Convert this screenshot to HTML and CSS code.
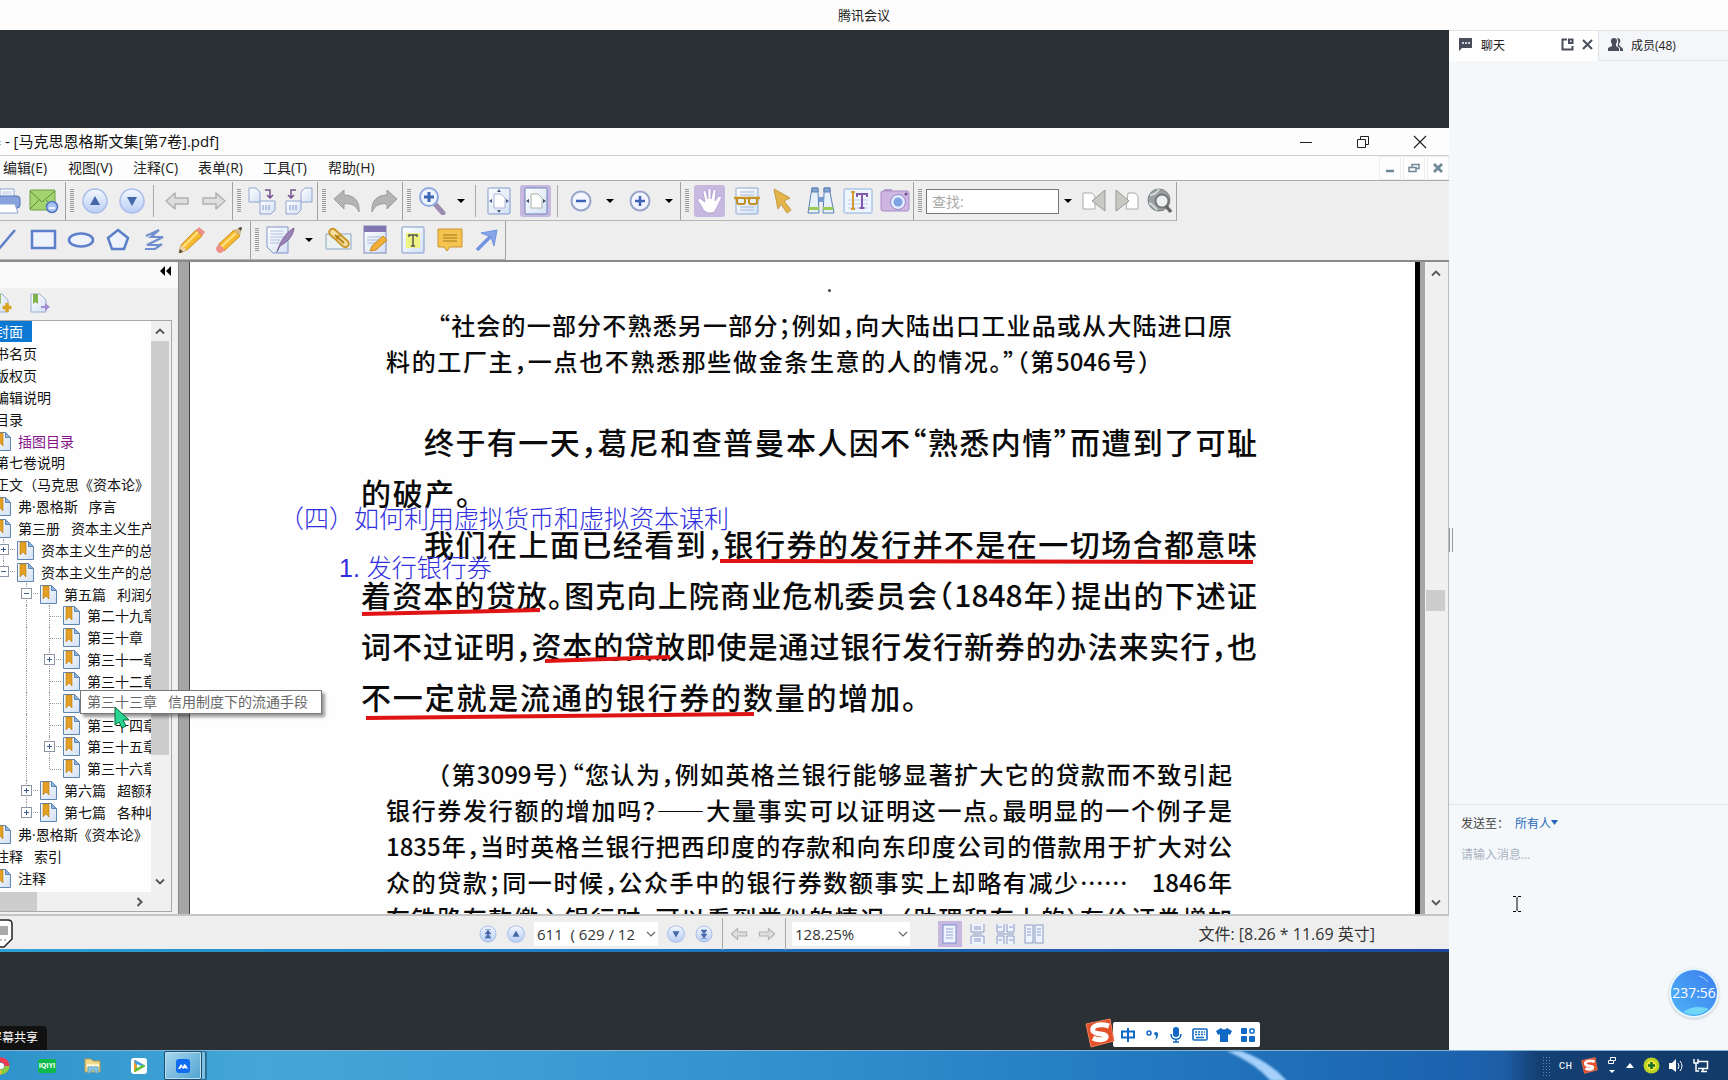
FILE: index.html
```html
<!DOCTYPE html>
<html lang="zh-CN">
<head>
<meta charset="utf-8">
<title>腾讯会议</title>
<link rel="stylesheet" href="styles.css">
</head>
<body>
<svg class="defs" width="0" height="0" aria-hidden="true">
  <defs>
    <linearGradient id="gBlue" x1="0" y1="0" x2="0" y2="1"><stop offset="0" stop-color="#f4f8ff"/><stop offset="1" stop-color="#b9cdf3"/></linearGradient>
    <linearGradient id="gPaper" x1="0" y1="0" x2="1" y2="1"><stop offset="0" stop-color="#ffffff"/><stop offset="1" stop-color="#d3e0f3"/></linearGradient>
    <linearGradient id="gBall" x1="0" y1="1" x2="1" y2="0"><stop offset="0" stop-color="#4db4f7"/><stop offset="1" stop-color="#3c7df0"/></linearGradient>
  </defs>
  <symbol id="bm" viewBox="0 0 17 19"><path d="M.5.5h11l5 5v13H.5z" fill="url(#gPaper)" stroke="#5f86b3"/><path d="M11.500.5v5h5z" fill="#8fb6de" stroke="#5f86b3"/><path d="M3 1h6v13l-3-3-3 3z" fill="#e3a024" stroke="#b67a10" stroke-width=".6"/></symbol>
  <symbol id="up" viewBox="0 0 26 26"><circle cx="13" cy="13" r="12" fill="url(#gBlue)" stroke="#a9bdea" stroke-width="1.500"/><path d="M13 8l5 9H8z" fill="#4467a8"/></symbol>
  <symbol id="down" viewBox="0 0 26 26"><circle cx="13" cy="13" r="12" fill="url(#gBlue)" stroke="#a9bdea" stroke-width="1.500"/><path d="M13 18l5-9H8z" fill="#4467a8"/></symbol>
  <symbol id="left" viewBox="0 0 26 20"><path d="M2 10l9-8v5h13v6H11v5z" fill="#dedede" stroke="#b0b0b0" stroke-width="1.500" stroke-linejoin="round"/></symbol>
  <symbol id="right" viewBox="0 0 26 20"><path d="M24 10l-9-8v5H2v6h13v5z" fill="#dedede" stroke="#b0b0b0" stroke-width="1.500" stroke-linejoin="round"/></symbol>
  <symbol id="chev" viewBox="0 0 12 8"><path d="M2 1.500l4 4 4-4" fill="none" stroke="currentColor" stroke-width="1.800"/></symbol>
  <symbol id="thin" viewBox="0 0 12 8"><path d="M2 2l4 4 4-4" fill="none" stroke="#666" stroke-width="1.200"/></symbol>
  <symbol id="sogou" viewBox="0 0 30 30"><path d="M1 6L25 1l4 22-23 6z" fill="#e2512a" stroke="#f0805c"/><path d="M24 8C14 5 6 8 8 13c2 4 12 2 13 5 1 4-8 5-13 2" fill="none" stroke="#fff" stroke-width="5"/></symbol>
</svg>

<header class="app-title">腾讯会议</header>
<main class="main">
  <section class="stage">
    <div class="win">
      <div class="win-title">
        <h1>器 - [马克思恩格斯文集[第7卷].pdf]</h1>
        <div class="win-btns">
          <button aria-label="最小化"><svg width="14" height="14"><path d="M1 7.500h12" stroke="#222"/></svg></button>
          <button aria-label="还原"><svg width="14" height="14" fill="none" stroke="#222"><path d="M1.500 4.500h8v8h-8zM4.500 4.500v-3h8v8h-3"/></svg></button>
          <button aria-label="关闭"><svg width="14" height="14"><path d="M1 1l12 12M13 1L1 13" stroke="#222" stroke-width="1.200"/></svg></button>
        </div>
      </div>
      <nav class="menu">
        <button>编辑(E)</button><button>视图(V)</button><button>注释(C)</button><button>表单(R)</button><button>工具(T)</button><button>帮助(H)</button>
        <div class="mdi">
          <button aria-label="最小化文档"><svg width="10" height="10"><path d="M1 8h8" stroke="#718896" stroke-width="2.500"/></svg></button>
          <button aria-label="还原文档"><svg width="12" height="10" fill="none" stroke="#718896" stroke-width="1.500"><path d="M1 4.500h7v4H1zM4 4V1.500h7v4H8"/></svg></button>
          <button aria-label="关闭文档"><svg width="10" height="10"><path d="M1 1l8 8M9 1L1 9" stroke="#718896" stroke-width="2.800"/></svg></button>
        </div>
      </nav>

      <div class="bars">
        <div class="bar">
          <div class="group first">
            <button class="tool" aria-label="打印"><svg width="28" height="26"><path d="M7 9V1h14v8" fill="#fff" stroke="#8aa5d4"/><rect x="1" y="8" width="26" height="12" rx="3" fill="#86a3de" stroke="#5574b5"/><path d="M6 16h16l3 9H3z" fill="#fff" stroke="#8aa5d4"/><path d="M9 4h10M9 6h10" stroke="#b5c4e4"/></svg></button>
            <button class="tool" aria-label="邮件"><svg width="30" height="26"><rect x="1" y="2" width="25" height="20" rx="1" fill="#a3d36e" stroke="#6f9f45"/><path d="M1 3l12 11L26 3M1 21l9-9M26 21l-9-9" fill="none" stroke="#5f913a"/><circle cx="23" cy="19" r="5.500" fill="#a9c4f2" stroke="#4f74c0" stroke-width="1.500"/><path d="M20 20h6" stroke="#fff" stroke-width="1.500"/></svg></button>
          </div>
          <div class="group"><i class="grip"></i>
            <button class="tool" aria-label="上一页"><svg width="26" height="26"><use href="#up"/></svg></button>
            <button class="tool" aria-label="下一页"><svg width="26" height="26"><use href="#down"/></svg></button>
            <i class="sep"></i>
            <button class="tool" aria-label="后退"><svg width="26" height="20"><use href="#left"/></svg></button>
            <button class="tool" aria-label="前进"><svg width="26" height="20"><use href="#right"/></svg></button>
          </div>
          <div class="group"><i class="grip"></i>
            <button class="tool" aria-label="导入页"><svg width="28" height="28" stroke="#91a4d1"><path d="M1 1h7l4 4v10H1z" fill="url(#gPaper)"/><path d="M12 14h15v9l-4 4H12z" fill="url(#gPaper)"/><path d="M15 18v5M18 18v5M21 18v5" stroke="#7f93cd"/><path d="M17 3h5v8m-3-3l3 3 3-3" fill="none" stroke="#77508f" stroke-width="1.500"/></svg></button>
            <button class="tool" aria-label="导出页"><svg width="28" height="28" stroke="#91a4d1"><path d="M20 1h7v14H16V5z" fill="url(#gPaper)"/><path d="M1 14h15v9l-4 4H1z" fill="url(#gPaper)"/><path d="M5 18v5M8 18v5M11 18v5" stroke="#7f93cd"/><path d="M11 3H6v8m-3-3l3 3 3-3" fill="none" stroke="#77508f" stroke-width="1.500"/></svg></button>
          </div>
          <div class="group"><i class="grip"></i>
            <button class="tool" aria-label="撤销"><svg width="28" height="24"><path d="M1 10L11 1v5c10 0 16 6 15 17-3-7-8-9-15-8v5z" fill="#b4b4b4" stroke="#9c9c9c"/></svg></button>
            <button class="tool" aria-label="重做"><svg width="28" height="24"><path d="M27 10L17 1v5C7 6 1 12 2 23c3-7 8-9 15-8v5z" fill="#b4b4b4" stroke="#9c9c9c"/></svg></button>
          </div>
          <div class="group"><i class="grip"></i>
            <button class="tool" aria-label="放大镜"><svg width="28" height="28"><path d="M17 17l8 9" stroke="#9b8cb0" stroke-width="5" stroke-linecap="round"/><circle cx="11" cy="10" r="9" fill="#eef4ff" stroke="#8faadd" stroke-width="2"/><path d="M11 5v10M6 10h10" stroke="#3f67b0" stroke-width="3"/></svg></button>
            <button class="caret" aria-label="缩放选项"></button>
            <i class="sep"></i>
            <button class="tool" aria-label="适合页面"><svg width="24" height="28"><rect x="1" y="1" width="22" height="26" rx="1" fill="url(#gPaper)" stroke="#7f9bd0"/><path d="M7 7h7l4 4v10H7z" fill="#fff" stroke="#a6b6d6"/><path d="M12 2l2 3h-4zM12 26l2-3h-4zM2 14l3-2v4zM22 14l-3-2v4z" fill="#4a5d88"/></svg></button>
            <button class="tool on" aria-label="适合宽度"><svg width="24" height="28"><rect x="1" y="1" width="22" height="26" rx="1" fill="url(#gPaper)" stroke="#6a82bb"/><path d="M7 7h7l4 4v10H7z" fill="#fff" stroke="#a6b6a6"/><path d="M2 14l3-2v4zM22 14l-3-2v4z" fill="#39496f"/></svg></button>
            <i class="sep"></i>
            <button class="tool" aria-label="缩小"><svg width="22" height="22"><circle cx="11" cy="11" r="9.500" fill="#f3f6ff" stroke="#98a3c8" stroke-width="2"/><path d="M6 11h10" stroke="#3e62b4" stroke-width="2.500"/></svg></button>
            <button class="caret" aria-label="缩小选项"></button>
            <button class="tool" aria-label="放大"><svg width="22" height="22"><circle cx="11" cy="11" r="9.500" fill="#f3f6ff" stroke="#98a3c8" stroke-width="2"/><path d="M6 11h10M11 6v10" stroke="#3e62b4" stroke-width="2.500"/></svg></button>
            <button class="caret" aria-label="放大选项"></button>
          </div>
          <div class="group"><i class="grip"></i>
            <button class="tool on" aria-label="手形工具"><svg width="26" height="28"><path d="M8 15L6 5c0-2 3-2 3 0l2 7V3c0-2 3-2 3 0v9l2-8c0-2 3-2 3 0l-1 10 3-4c2-2 4 0 3 2l-5 10c-1 3-3 4-6 4-4 0-7-3-8-6L1 14c-1-2 2-4 4-1z" fill="#fff" stroke="#a996cf" stroke-width=".7"/></svg></button>
            <button class="tool" aria-label="阅读"><svg width="28" height="28"><rect x="3" y="1" width="22" height="26" rx="1" fill="url(#gPaper)" stroke="#8da6d2"/><path d="M7 5h14M7 8h14M7 20h14M7 23h14" stroke="#a8b9da"/><path d="M1 11h26" stroke="#c99a2b" stroke-width="2.500"/><rect x="4" y="11" width="8" height="6" rx="2" fill="#e7f0fb" stroke="#c08f20" stroke-width="2"/><rect x="16" y="11" width="8" height="6" rx="2" fill="#e7f0fb" stroke="#c08f20" stroke-width="2"/></svg></button>
            <button class="tool" aria-label="选择"><svg width="22" height="26"><path d="M1 1l16 9-6 3 7 9-4 3-6-9-3 5z" fill="#e3b54c" stroke="#c59a3a"/></svg></button>
            <button class="tool" aria-label="查找"><svg width="28" height="28" stroke="#5d7fb5"><path d="M5 1h6v4l1 21H1L4 7z" fill="#e6f1fb"/><path d="M17 1h6v4l4 21H16l1-19z" fill="#e6f1fb"/><path d="M5 1h6v4H5zM17 1h6v4h-6z" fill="#83a6d6"/><path d="M2 20h10v3H2zM16 20h10v3H16z" fill="#9acb57" stroke="none"/><path d="M12 10h5v5h-5z" fill="#7599cf" stroke="none"/></svg></button>
            <button class="tool" aria-label="选择文本"><svg width="30" height="26"><rect x="1" y="1" width="28" height="24" rx="1" fill="#eef5ff" stroke="#8cafdf"/><path d="M5 12h20M5 16h20M5 20h20" stroke="#c0cfe6"/><path d="M10 4v17M8 4h4M8 21h4" stroke="#d09b32" stroke-width="2"/><path d="M14 9V6h10v3M19 6v14M16.500 20h5" stroke="#7f5aa8" stroke-width="2" fill="none"/></svg></button>
            <button class="tool" aria-label="快照"><svg width="30" height="26"><rect x="4" y="1" width="8" height="5" fill="#b79ed0"/><rect x="1" y="3" width="28" height="20" rx="2" fill="#cfb6e1" stroke="#a98cc6"/><circle cx="18" cy="14" r="7.500" fill="#e4ecff" stroke="#9387c4"/><circle cx="18" cy="14" r="4.500" fill="#7fa2e2"/><circle cx="26" cy="6" r="1.500" fill="#6d4a94"/></svg></button>
          </div>
          <div class="group"><i class="grip"></i>
            <input class="find" type="text" placeholder="查找:" aria-label="查找">
            <button class="caret find-caret" aria-label="查找选项"></button>
            <button class="tool small" aria-label="查找上一个"><svg width="26" height="24" stroke="#aaa"><path d="M2 4h9l3 3v13H2z" fill="#fff"/><path d="M24 1v21L11 12z" fill="#c9c8c2" stroke="#999"/></svg></button>
            <button class="tool small" aria-label="查找下一个"><svg width="26" height="24" stroke="#aaa"><path d="M14 4h7l3 3v13H12z" fill="#fff"/><path d="M2 1v21l13-10z" fill="#c9c8c2" stroke="#999"/></svg></button>
            <button class="tool small" aria-label="高级搜索"><svg width="26" height="26"><circle cx="12" cy="12" r="11" fill="#9aa0a3" stroke="#7b8082"/><path d="M3 7c5 0 7-3 9-6M2 15c5 2 6 5 8 7" stroke="#d5d9da" stroke-width="2" fill="none"/><circle cx="15" cy="13" r="6.500" fill="#eef1f2" stroke="#777" stroke-width="2"/><path d="M19 18l5 6" stroke="#666" stroke-width="3.500"/></svg></button>
          </div>
        </div>
        <div class="bar">
          <div class="group first">
            <button class="tool" aria-label="直线"><svg width="24" height="24"><path d="M3 22L20 2" stroke="#5b7fc9" stroke-width="2.500"/></svg></button>
            <button class="tool" aria-label="矩形"><svg width="28" height="22"><rect x="2" y="2" width="23" height="17" fill="#eef2fb" stroke="#5b7fc9" stroke-width="2.500"/></svg></button>
            <button class="tool" aria-label="椭圆"><svg width="28" height="20"><ellipse cx="14" cy="10" rx="12" ry="6.500" fill="#eef2fb" stroke="#5b7fc9" stroke-width="2.500"/></svg></button>
            <button class="tool" aria-label="多边形"><svg width="26" height="24"><path d="M13 2l10 8-4 11H7L3 10z" fill="#eef2fb" stroke="#5b7fc9" stroke-width="2.500"/></svg></button>
            <button class="tool" aria-label="折线"><svg width="24" height="24"><path d="M3 8L16 2 8 9h12L4 17h13M2 21h10l7-5" fill="none" stroke="#6f8fd0" stroke-width="2.200"/></svg></button>
            <button class="tool" aria-label="铅笔"><svg width="28" height="28"><path d="M1 27l2-8L18 4l6 6L9 24z" fill="#f6b92f" stroke="#c98e1e"/><path d="M5 21L20 6" stroke="#ffe28a" stroke-width="2"/><path d="M18 4l3-3 6 5-3 4z" fill="#ee8f8a"/><path d="M1 27l2-8 6 5z" fill="#ecd1a7"/><path d="M1 27l1-4 3 3z" fill="#444"/></svg></button>
            <button class="tool" aria-label="橡皮擦"><svg width="28" height="28"><path d="M3 19L19 4l6 6L9 25z" fill="#f6b92f" stroke="#c98e1e"/><path d="M6 21L21 7" stroke="#ffe28a" stroke-width="2"/><path d="M1 22l3-4 6 6-4 3c-3 0-5-2-5-5z" fill="#ee8f8a"/><path d="M19 4l8-3-2 9z" fill="#d9b98a"/><path d="M23 2l4-1-1 4z" fill="#444"/></svg></button>
          </div>
          <div class="group"><i class="grip"></i>
            <button class="tool" aria-label="签名"><svg width="30" height="30"><path d="M2 2h21v26H8l-6-6z" fill="url(#gPaper)" stroke="#7f95c6"/><path d="M5 6h13M5 9h13M5 12h13M5 15h10M5 18h10" stroke="#b3c0dd"/><path d="M12 27C15 17 20 8 29 3c-1 9-7 14-14 18z" fill="#9b84b8" stroke="#7c6698"/></svg></button>
            <button class="caret" aria-label="签名选项"></button>
            <button class="tool" aria-label="链接"><svg width="28" height="26"><path d="M1 7h25v15H1z" fill="#e9f2ee" stroke="#8ba6c4"/><rect x="3" y="4" width="14" height="7" rx="3.500" transform="rotate(42 10 8)" fill="#f3dfa0" stroke="#c9972c" stroke-width="2"/><rect x="11" y="11" width="14" height="7" rx="3.500" transform="rotate(42 18 14)" fill="#f3dfa0" stroke="#c9972c" stroke-width="2"/><path d="M10 8l9 8" stroke="#b07f18" stroke-width="2"/></svg></button>
            <button class="tool" aria-label="便签"><svg width="26" height="30"><rect x="1" y="1" width="22" height="27" fill="url(#gPaper)" stroke="#7f88bd"/><rect x="1" y="1" width="22" height="6" fill="#8176b2"/><path d="M4 12h14M4 15h12M4 18h9" stroke="#a9b6d7"/><path d="M7 26l2-5 11-10 4 4-11 10z" fill="#f3ae35" stroke="#c48a24"/></svg></button>
            <button class="tool" aria-label="文本框"><svg width="24" height="28"><rect x="1" y="1" width="22" height="26" rx="1" fill="url(#gPaper)" stroke="#7f99cb"/><rect x="5" y="7" width="14" height="15" fill="#eef283"/><path d="M8 11V9h8v2M12 9v11M10 20h4" fill="none" stroke="#555" stroke-width="1.500"/></svg></button>
            <button class="tool" aria-label="批注"><svg width="28" height="26"><path d="M2 2h24v18H14l-3 4-3-4H2z" fill="#f5c34f" stroke="#c79530"/><path d="M7 8h14M7 11h14M7 14h14" stroke="#a87a1c"/></svg></button>
            <button class="tool" aria-label="箭头"><svg width="24" height="24"><path d="M2 22L16 8" stroke="#7094de" stroke-width="3.500"/><path d="M6 5L22 2l-3 16-3-9z" fill="#86a4e8" stroke="#7094de"/></svg></button>
          </div>
        </div>
      </div>

      <div class="work">
        <aside class="side">
          <div class="side-head"><button aria-label="折叠"><svg width="12" height="10"><path d="M6 0v10L1 5zM12 0v10L7 5z" fill="#000"/></svg></button></div>
          <div class="side-tools">
            <button aria-label="添加书签"><svg width="20" height="20"><path d="M1 1h9l6 6v12H1z" fill="url(#gPaper)" stroke="#98aecb"/><path d="M3 1h6v10l-3-2-3 2z" fill="#95c064"/><path d="M15 10v9M10.500 14.500h9" stroke="#d9a520" stroke-width="3.500"/></svg></button>
            <button aria-label="展开书签"><svg width="20" height="20"><path d="M1 1h9l6 6v12H1z" fill="url(#gPaper)" stroke="#98aecb"/><path d="M3 1h5v10l-2.500-2L3 11z" fill="#7fb14e"/><path d="M11 13h4v-3l5 4-5 4v-3h-4z" fill="#a48cd0"/></svg></button>
          </div>
          <div class="list">
            <div class="list-main">
              <ul class="tree">
                <li><svg class="bm"><use href="#bm"/></svg><a href="#" class="sel">封面</a></li>
                <li><svg class="bm"><use href="#bm"/></svg><a href="#">书名页</a></li>
                <li><svg class="bm"><use href="#bm"/></svg><a href="#">版权页</a></li>
                <li><svg class="bm"><use href="#bm"/></svg><a href="#">编辑说明</a></li>
                <li><svg class="bm"><use href="#bm"/></svg><a href="#">目录</a></li>
                <li><i></i><svg class="bm"><use href="#bm"/></svg><a href="#" class="seen">插图目录</a></li>
                <li><svg class="bm"><use href="#bm"/></svg><a href="#">第七卷说明</a></li>
                <li><svg class="bm"><use href="#bm"/></svg><a href="#">正文（马克思《资本论》</a></li>
                <li><i></i><svg class="bm"><use href="#bm"/></svg><a href="#">弗·恩格斯&nbsp;&nbsp; 序言</a></li>
                <li><i></i><svg class="bm"><use href="#bm"/></svg><a href="#">第三册&nbsp;&nbsp; 资本主义生产的总过程</a></li>
                <li><i></i><i class="v h plus"></i><svg class="bm"><use href="#bm"/></svg><a href="#">资本主义生产的总过程（上）</a></li>
                <li><i></i><i class="v h end minus"></i><svg class="bm"><use href="#bm"/></svg><a href="#">资本主义生产的总过程（下）</a></li>
                <li><i></i><i></i><i class="v h minus"></i><svg class="bm"><use href="#bm"/></svg><a href="#">第五篇&nbsp;&nbsp; 利润分为利息</a></li>
                <li><i></i><i></i><i class="v"></i><i class="v h"></i><svg class="bm"><use href="#bm"/></svg><a href="#">第二十九章</a></li>
                <li><i></i><i></i><i class="v"></i><i class="v h"></i><svg class="bm"><use href="#bm"/></svg><a href="#">第三十章</a></li>
                <li><i></i><i></i><i class="v"></i><i class="v h plus"></i><svg class="bm"><use href="#bm"/></svg><a href="#">第三十一章</a></li>
                <li><i></i><i></i><i class="v"></i><i class="v h"></i><svg class="bm"><use href="#bm"/></svg><a href="#">第三十二章</a></li>
                <li><i></i><i></i><i class="v"></i><i class="v h"></i><svg class="bm"><use href="#bm"/></svg><a href="#">第三十三章</a></li>
                <li><i></i><i></i><i class="v"></i><i class="v h"></i><svg class="bm"><use href="#bm"/></svg><a href="#">第三十四章</a></li>
                <li><i></i><i></i><i class="v"></i><i class="v h plus"></i><svg class="bm"><use href="#bm"/></svg><a href="#">第三十五章</a></li>
                <li><i></i><i></i><i class="v"></i><i class="v h end"></i><svg class="bm"><use href="#bm"/></svg><a href="#">第三十六章</a></li>
                <li><i></i><i></i><i class="v h plus"></i><svg class="bm"><use href="#bm"/></svg><a href="#">第六篇&nbsp;&nbsp; 超额利润</a></li>
                <li><i></i><i></i><i class="v h end plus"></i><svg class="bm"><use href="#bm"/></svg><a href="#">第七篇&nbsp;&nbsp; 各种收入</a></li>
                <li><i></i><svg class="bm"><use href="#bm"/></svg><a href="#">弗·恩格斯《资本论》</a></li>
                <li><svg class="bm"><use href="#bm"/></svg><a href="#">注释&nbsp;&nbsp; 索引</a></li>
                <li><i></i><svg class="bm"><use href="#bm"/></svg><a href="#">注释</a></li>
              </ul>
              <div class="vbar">
                <button class="flip" aria-label="向上"><svg width="12" height="8"><use href="#chev"/></svg></button>
                <div class="track"><div class="thumb"></div></div>
                <button aria-label="向下"><svg width="12" height="8"><use href="#chev"/></svg></button>
              </div>
            </div>
            <div class="hbar"><div class="thumb"></div><button aria-label="向右"><svg width="8" height="12"><path d="M1.500 2l4 4-4 4" fill="none" stroke="#555" stroke-width="2"/></svg></button></div>
          </div>
          <div class="tip" role="tooltip">第三十三章&nbsp;&nbsp; 信用制度下的流通手段</div>
          <svg class="pointer" width="18" height="24"><path d="M2 1v18l4-3 3 6 4-2-3-6h6z" fill="#28d592" stroke="#063" /></svg>
        </aside>
        <div class="split"></div>
        <article class="page">
          <i class="speck"></i>
          <p class="quote"><span class="line in">“社会的一部分不熟悉另一部分；例如，向大陆出口工业品或从大陆进口原</span><span class="line short">料的工厂主，一点也不熟悉那些做金条生意的人的情况。”（第5046号）</span></p>
          <p class="text"><span class="line in">终于有一天，葛尼和查普曼本人因不“熟悉内情”而遭到了可耻</span><span class="line last">的破产。</span><span class="line in">我们在上面已经看到，银行券的发行并不是在一切场合都意味</span><span class="line">着资本的贷放。图克向上院商业危机委员会（1848年）提出的下述证</span><span class="line">词不过证明，资本的贷放即使是通过银行发行新券的办法来实行，也</span><span class="line closing">不一定就是流通的银行券的数量的增加。</span></p>
          <p class="quote"><span class="line in">（第3099号）“您认为，例如英格兰银行能够显著扩大它的贷款而不致引起</span><span class="line">银行券发行额的增加吗？——大量事实可以证明这一点。最明显的一个例子是</span><span class="line">1835年，当时英格兰银行把西印度的存款和向东印度公司的借款用于扩大对公</span><span class="line">众的贷款；同一时候，公众手中的银行券数额事实上却略有减少……&emsp;1846年</span><span class="line">在铁路存款缴入银行时，可以看到类似的情况。（助理和存上的）有价证券增加</span></p>
          <span class="note note-a">（四）如何利用虚拟货币和虚拟资本谋利</span>
          <span class="note note-b">1. 发行银行券</span>
          <svg class="marks" width="1226" height="652" fill="none" stroke="#e01414" stroke-width="4"><path d="M530 299l533 1M172 352l178-4M355 399l125-4M176 456l388-4"/></svg>
        </article>
        <div class="edge"></div>
        <div class="vbar doc-bar">
          <button class="flip" aria-label="向上滚动"><svg width="12" height="8"><use href="#chev"/></svg></button>
          <div class="track"><div class="thumb"></div></div>
          <button aria-label="向下滚动"><svg width="12" height="8"><use href="#chev"/></svg></button>
        </div>
      </div>

      <footer class="status">
        <svg class="badge" width="14" height="30"><path d="M0 1h8q4 0 4 4v15l-8 8H0" fill="#fff" stroke="#222" stroke-width="1.500"/><path d="M0 7h8v9H0z" fill="#aaa"/><path d="M0 21h8" stroke="#777" stroke-dasharray="2"/></svg>
        <button aria-label="首页"><svg width="18" height="18"><circle cx="9" cy="9" r="8" fill="url(#gBlue)" stroke="#a9bdea"/><path d="M9 5l3 4H6zM9 9l3 4H6zM6 4.500h6" fill="#4467a8" stroke="#4467a8" stroke-width=".5"/></svg></button>
        <button aria-label="上页"><svg width="18" height="18"><use href="#up"/></svg></button>
        <span class="combo num"><select aria-label="页码"><option>611&nbsp; ( 629 / 12</option></select><svg width="12" height="8"><use href="#thin"/></svg></span>
        <button aria-label="下页"><svg width="18" height="18"><use href="#down"/></svg></button>
        <button aria-label="末页"><svg width="18" height="18"><circle cx="9" cy="9" r="8" fill="url(#gBlue)" stroke="#a9bdea"/><path d="M9 9l3-4H6zM9 13l3-4H6zM6 13.500h6" fill="#4467a8" stroke="#4467a8" stroke-width=".5"/></svg></button>
        <i class="sep"></i>
        <button aria-label="后退视图"><svg width="18" height="18"><use href="#left"/></svg></button>
        <button aria-label="前进视图"><svg width="18" height="18"><use href="#right"/></svg></button>
        <i class="sep"></i>
        <span class="combo zoom"><select aria-label="缩放"><option>128.25%</option></select><svg width="12" height="8"><use href="#thin"/></svg></span>
        <div class="views">
          <button class="on" aria-label="单页"><svg width="18" height="20"><rect x="2" y="1" width="13" height="18" fill="#eef3ff" stroke="#7c8fcb"/><path d="M5 5h7M5 8h7M5 11h7M5 14h7" stroke="#93a5d8"/></svg></button>
          <button aria-label="连续"><svg width="18" height="20" fill="#eef3ff" stroke="#8b9cc4"><path d="M2 0v8h13V0M2 20v-8h13v8"/><path d="M4 10h9M5 3h7M5 5h7M5 15h7M5 17h7"/></svg></button>
          <button aria-label="连续对开"><svg width="20" height="20" fill="#eef3ff" stroke="#8b9cc4"><path d="M1 0v8h7V0M11 0v8h7V0M1 20v-8h7v8M11 20v-8h7v8M2 3h4M13 3h4M2 16h4M13 16h4M1 10h17"/></svg></button>
          <button aria-label="对开"><svg width="20" height="20" fill="#eef3ff" stroke="#8b9cc4"><rect x="1" y="1" width="8" height="18"/><rect x="11" y="1" width="8" height="18"/><path d="M3 5h4M3 8h4M3 11h4M13 5h4M13 8h4M13 11h4"/></svg></button>
        </div>
        <span class="size">文件: [8.26 * 11.69 英寸]</span>
      </footer>
    </div>

    <div class="share">屏幕共享</div>
    <div class="ime">
      <svg class="ime-logo" width="32" height="30"><use href="#sogou"/></svg>
      <button aria-label="中文"><svg width="16" height="16" fill="none" stroke="#1069c4" stroke-width="2"><path d="M2 4.500h12v6H2zM8 1v14"/></svg></button>
      <button aria-label="标点"><svg width="14" height="14"><circle cx="4" cy="5" r="2" fill="none" stroke="#1069c4" stroke-width="1.500"/><path d="M9 6a2 2 0 114 0c0 3-1 5-3 6 1-2 1-3 1-4z" fill="#1069c4"/></svg></button>
      <button aria-label="语音"><svg width="14" height="16"><rect x="4" y="0" width="6" height="10" rx="3" fill="#1069c4"/><path d="M2 7c0 7 10 7 10 0M7 12v3M4 15h6" fill="none" stroke="#1069c4" stroke-width="1.500"/></svg></button>
      <button aria-label="键盘"><svg width="16" height="14"><rect x="1" y="1" width="14" height="11" rx="1" fill="none" stroke="#1069c4" stroke-width="1.600"/><path d="M3 4h10M3 6.500h10" stroke="#1069c4" stroke-width="1.600" stroke-dasharray="2 1"/><path d="M4 9.500h8" stroke="#1069c4" stroke-width="1.500"/></svg></button>
      <button aria-label="皮肤"><svg width="16" height="14"><path d="M5 0q3 3 6 0l5 3-2 4-2-1v8H4V6L2 7 0 3z" fill="#1069c4"/></svg></button>
      <button aria-label="工具箱"><svg width="14" height="14" fill="#1069c4"><rect width="6" height="6" rx="1"/><rect y="8" width="6" height="6" rx="1"/><rect x="8" y="8" width="6" height="6" rx="1"/><rect x="9" y="1" width="4" height="4" rx="1" fill="none" stroke="#1069c4" stroke-width="1.600"/></svg></button>
    </div>
    <i class="handle"></i>
  </section>

  <aside class="chat">
    <div class="tabs">
      <div class="tab active">
        <svg width="15" height="13"><path d="M1 0h13v10H4l-3 3z" fill="#4a4e5c"/><path d="M4 5h2M7 5h2M10 5h2" stroke="#fff" stroke-width="1.500"/></svg>
        <span>聊天</span>
        <button class="pop" aria-label="弹出"><svg width="13" height="13" fill="none" stroke="#4a4e5c" stroke-width="2"><path d="M6 1.500H1.500v10h10V8M8 1.500h3.500V5H8z"/></svg></button>
        <button aria-label="关闭聊天"><svg width="11" height="11"><path d="M1 1l9 9M10 1l-9 9" stroke="#4a4e5c" stroke-width="2"/></svg></button>
      </div>
      <div class="tab">
        <svg width="15" height="13" fill="#4a4e5c"><path d="M6 0c3 0 4 3 2 6v2l3 2v3H0v-3l4-2V6C2 3 3 0 6 0z"/><path d="M9 0c4 0 4 4 2 6v1l4 4v2h-3v-3L9.500 8C11 4 10 2 9 0z"/></svg>
        <span>成员(48)</span>
      </div>
    </div>
    <div class="messages"></div>
    <div class="compose">
      <div class="to">发送至： <button>所有人<svg width="8" height="6"><path d="M0 0h7L3.500 5z" fill="#2468b8"/></svg></button></div>
      <textarea placeholder="请输入消息..." aria-label="消息"></textarea>
      <svg class="ibeam" width="8" height="16"><path d="M0 .5h3M5 .5h3M4 1v14M0 15.500h3M5 15.500h3" stroke="#000"/></svg>
      <div class="ball"><svg width="46" height="46"><circle cx="23" cy="23" r="23" fill="url(#gBall)"/><path d="M12 42q12-8 26-3a23 23 0 01-26 3" fill="#6fd6f8"/><path d="M28 6q5 1 9 6" stroke="#9fd0ff" fill="none"/></svg><span>237:56</span></div>
    </div>
  </aside>
</main>

<footer class="taskbar">
  <svg class="swoosh" width="90" height="30"><path d="M0 0h14q28 10 46 30H44Q28 12 0 0z" fill="#a4d0fb"/></svg>
  <div class="apps">
    <button aria-label="浏览器"><svg width="18" height="18"><circle cx="9" cy="9" r="6" fill="none" stroke="#f0394d" stroke-width="5"/><path d="M9 15a6 6 0 006-6" fill="none" stroke="#8bcf3c" stroke-width="5"/><path d="M3 9a6 6 0 006 6" fill="none" stroke="#f6c62c" stroke-width="5"/><circle cx="9" cy="9" r="3" fill="#fff"/></svg></button>
    <button aria-label="视频" class="iq"><span>iQIYI</span></button>
    <button aria-label="资源管理器"><svg width="18" height="16"><path d="M1 1h6l2 2h7v11H1z" fill="#eed98c" stroke="#b99a4a"/><path d="M3 6h12v3H3z" fill="#fff6cf"/><path d="M4 15V9h10v6h-3v-3H7v3z" fill="#8ecbea" stroke="#5c9fc6"/></svg></button>
    <button aria-label="腾讯视频"><svg width="16" height="16"><rect width="16" height="16" rx="3" fill="#fff"/><path d="M4 3l9 5-9 5z" fill="#f19a2a" stroke="#f19a2a" stroke-width="2" stroke-linejoin="round"/><path d="M4 3l9 5-5 1z" fill="#3aa0e8" stroke="#3aa0e8" stroke-width="2" stroke-linejoin="round"/><path d="M13 8l-9 5 3-4z" fill="#5cc43a" stroke="#5cc43a" stroke-width="2" stroke-linejoin="round"/><path d="M6 6l4 2-4 2z" fill="#fff"/></svg></button>
    <button aria-label="腾讯会议" class="running"><svg width="14" height="14"><rect width="14" height="14" rx="3" fill="#0f6bf0"/><path d="M2 10l3-5 2 3 1-3 2 1 2 4-3-1-2 1-1-2-2 2z" fill="#fff"/></svg></button>
  </div>
  <div class="tray">
    <i class="dots"></i>
    <span class="ch">CH</span>
    <svg width="17" height="17" viewBox="0 0 30 30"><use href="#sogou" width="30" height="30"/></svg>
    <svg width="10" height="20" fill="none" stroke="#fff"><path d="M1.500 4.500h5v3h-5zM3.500 4V1.500h5v3H7"/><path d="M2 14h6l-3 3z" fill="#fff" stroke="none"/></svg>
    <svg width="8" height="5"><path d="M0 5h8L4 0z" fill="#fff"/></svg>
    <svg width="17" height="17"><circle cx="8.500" cy="8.500" r="8" fill="#b9d422"/><circle cx="8.500" cy="8.500" r="5" fill="#f6e23a"/><path d="M8.500 5v7M5 8.500h7" stroke="#15702c" stroke-width="2.500"/></svg>
    <svg width="15" height="14"><path d="M0 4h3l4-4v13L3 10H0z" fill="#fff"/><path d="M9 4q2 3 0 6M11 2q4 5 0 10" fill="none" stroke="#fff"/></svg>
    <svg width="16" height="15" fill="none" stroke="#fff" stroke-width="1.500"><path d="M5 3.500h9.500v7H5M8 13.500h6M10 11v2M1 1v4h4V1M3 5v8h3"/></svg>
  </div>
</footer>
</body>
</html>
```
FILE: styles.css
```css
* { box-sizing: border-box; }
body {
  margin: 0;
  height: 100vh;
  display: flex;
  flex-direction: column;
  overflow: hidden;
  background: #fdfdfd;
  color: #111;
  font-family: "Open Sans", "Noto Sans CJK SC", sans-serif;
  font-size: 14px;
}
button, input, select, textarea { font: inherit; color: inherit; }
button { border: 0; padding: 0; margin: 0; background: none; display: flex; align-items: center; justify-content: center; }
svg { display: block; flex: none; }
.defs { position: absolute; }
a { color: inherit; text-decoration: none; }

.app-title { height: 30px; line-height: 31px; text-align: center; font-size: 13px; color: #222; }
.main { flex: 1; min-height: 0; display: flex; }
.stage { flex: 1; min-width: 0; display: flex; flex-direction: column; padding: 98px 0; background: #2b3034; position: relative; }

/* PDF reader window */
.win { flex: 1; min-height: 0; display: flex; flex-direction: column; background: #fdfdfd; border-bottom: 3px solid; border-image: linear-gradient(90deg, #2ea3d6, #1f7cc0 40%, #1b469c) 3; }
.win-title { height: 28px; display: flex; justify-content: space-between; border-bottom: 1px solid #cfcfcf; overflow: hidden; }
.win-title h1 { margin: 0 0 0 -14px; font-size: 15px; font-weight: 400; line-height: 26px; white-space: nowrap; }
.win-btns { display: flex; padding-right: 1px; }
.win-btns button { width: 57px; }
.menu { height: 25px; display: flex; border-bottom: 1px solid #aaa; }
.menu > button { width: 65px; height: 22px; justify-content: flex-start; padding-left: 3px; color: #222; }
.mdi { margin-left: auto; display: flex; gap: 2px; }
.mdi button { width: 22px; border: 1px solid #eee; }

.bars { background: #eee; border-bottom: 2px solid #8a8a8a; padding-top: 1px; }
.bar { height: 39px; display: flex; }
.group { height: 39px; display: flex; align-items: center; border-right: 1px solid #a3a3a3; border-bottom: 1px solid #b5b5b5; }
.group.first { margin-left: -12px; padding-right: 3px; }
.grip { width: 4px; height: 24px; margin: 0 2px 0 4px; background: repeating-linear-gradient(#999 0 1px, transparent 1px 2px); }
.sep { width: 1px; height: 32px; margin: 0 4px 0 3px; background: #aaa; }
.tool { width: 37px; height: 32px; }
.tool.small { width: 33px; }
.tool.on { width: 31px; margin: 0 3px; background: #c6b8de; border-radius: 3px; }
.caret { width: 22px; height: 30px; }
.caret::before { content: ""; border: 4px solid transparent; border-top-color: #000; border-bottom: 0; }
.find { width: 133px; height: 25px; margin-left: 2px; border: 1px solid #777; border-radius: 0; background: #fff; padding: 0 5px; font-size: 14px; }
.find::placeholder { color: #aaa; }
.find-caret { width: 18px; }

.work { flex: 1; min-height: 0; display: flex; background: #f0f0f0; }
.side { width: 178px; display: flex; flex-direction: column; position: relative; background: #f0f0f0; }
.side-head { height: 26px; display: flex; justify-content: flex-end; padding: 0 6px; background: #fafafa; }
.side-head button { width: 14px; height: 18px; }
.side-tools { height: 32px; display: flex; align-items: center; gap: 18px; margin-left: -8px; padding-bottom: 2px; }
.list { flex: 1; min-height: 0; margin: 0 6px 2px 0; display: flex; flex-direction: column; border: 1px solid #a8a8a8; border-left: 0; }
.list-main { flex: 1; min-height: 0; display: flex; background: #fefefe; }
.tree { flex: 1; min-width: 0; margin: 0; padding: 0 0 3px; list-style: none; overflow: hidden; display: grid; grid-auto-rows: 1fr; }
.tree li { margin-left: -31px; display: flex; align-items: center; white-space: nowrap; min-height: 0; }
.tree i { width: 23px; height: 100%; flex: none; position: relative; }
.tree .v::before { content: ""; position: absolute; left: 11px; top: 0; bottom: 0; border-left: 1px dotted #999; }
.tree .end::before { bottom: 50%; }
.tree .h::after { content: ""; position: absolute; left: 12px; right: 0; top: 50%; border-top: 1px dotted #999; }
.tree .plus::after, .tree .minus::after {
  left: 6px; right: 0; top: 5px; height: 11px; border: 0;
  background:
    linear-gradient(#3d5a8c, #3d5a8c) 3px 5px / 5px 1px no-repeat,
    linear-gradient(#3d5a8c, #3d5a8c) 5px 3px / 1px 5px no-repeat,
    linear-gradient(#fff, #fff) 1px 1px / 9px 9px no-repeat,
    linear-gradient(#8d96a5, #8d96a5) 0 0 / 11px 11px no-repeat,
    repeating-linear-gradient(90deg, #999 0 1px, transparent 1px 2px) 0 5px / 100% 1px no-repeat;
}
.tree .minus::after {
  background:
    linear-gradient(#3d5a8c, #3d5a8c) 3px 5px / 5px 1px no-repeat,
    linear-gradient(#fff, #fff) 1px 1px / 9px 9px no-repeat,
    linear-gradient(#8d96a5, #8d96a5) 0 0 / 11px 11px no-repeat,
    repeating-linear-gradient(90deg, #999 0 1px, transparent 1px 2px) 0 5px / 100% 1px no-repeat;
}
.bm { width: 17px; height: 19px; margin: 0 7px 0 2px; }
.tree a { line-height: 21px; }
.tree .sel { background: #0b78d4; color: #fff; padding: 0 9px 0 7px; margin-left: -7px; }
.tree .seen { color: #85138a; }

.vbar { width: 20px; padding-right: 2px; display: flex; flex-direction: column; background: #f0f0f0; color: #555; }
.vbar button { height: 20px; flex: none; }
.flip svg { transform: scaleY(-1); }
.vbar .track { flex: 1; }
.vbar .thumb { height: 78%; background: #cdcdcd; }
.hbar { height: 19px; display: flex; justify-content: space-between; background: #f0f0f0; padding-right: 27px; }
.hbar .thumb { width: 37px; background: #cdcdcd; }
.tip { position: absolute; left: 80px; top: 428px; height: 24px; padding: 0 13px 0 6px; line-height: 22px; white-space: nowrap; background: #fff; border: 1px solid #777; box-shadow: 3px 3px 3px rgba(0, 0, 0, .4); color: #666; z-index: 2; }
.pointer { position: absolute; left: 113px; top: 444px; z-index: 3; }
.split { width: 12px; background: #a6a6a6; border-left: 1px solid #888; border-right: 1px solid #444; }

/* Scanned page */
.page { flex: 1; min-width: 0; position: relative; overflow: hidden; background: #fefefe; padding-top: 45px; font-family: "Noto Sans CJK SC", sans-serif; font-weight: 500; color: #0a0a0a; font-feature-settings: "halt"; }
.page p { margin: 0; white-space: nowrap; }
.line { display: block; text-align: justify; text-align-last: justify; }
.quote .in { padding-left: 52px; }
.text .in { padding-left: 63px; }
.line.last { padding-right: 786px; }
.line.closing { padding-right: 340px; }
.line.short { padding-right: 82px; }
.page .quote { width: 846px; margin-left: 196px; font-size: 24px; line-height: 36px; }
.page .text { width: 896px; margin: 37px 0 34px 171px; font-size: 30px; line-height: 51px; }
.note { position: absolute; font-family: "Liberation Sans", "Noto Sans CJK SC", sans-serif; font-size: 25px; line-height: 30px; font-weight: 300; color: #2f2fe0; font-feature-settings: normal; white-space: nowrap; }
.note-a { left: 89px; top: 242px; }
.note-b { left: 149px; top: 291px; }
.marks { position: absolute; left: 0; top: 0; }
.speck { position: absolute; left: 638px; top: 27px; width: 3px; height: 3px; border-radius: 2px; background: #444; }
.edge { width: 10px; background: linear-gradient(90deg, #000 50%, #a6a6a6 50%); }
.doc-bar { width: 24px; border-right: 1px solid #bbb; }
.doc-bar button { height: 22px; }
.doc-bar .track { padding-top: 306px; }
.doc-bar .thumb { height: 21px; margin: 0 1px; }

.status { height: 35px; display: flex; align-items: center; background: #eee; border-top: 2px solid #c4c4c4; padding-top: 2px; font-size: 15px; color: #333; }
.status > button { width: 28px; height: 28px; }
.badge { margin-right: 460px; }
.combo { position: relative; display: flex; align-items: center; height: 24px; background: #fff; margin: 0 4px; }
.combo select { appearance: none; border: 0; border-radius: 0; background: none; width: 100%; padding: 0 3px; }
.combo svg { position: absolute; right: 1px; }
.combo.num { width: 124px; }
.combo.zoom { width: 118px; }
.status .sep { margin: 0 2px 0 4px; }
.views { display: flex; margin-left: 24px; gap: 4px; }
.views button { width: 24px; height: 26px; }
.views .on { background: #c6b8de; }
.size { margin-left: auto; margin-right: 74px; font-size: 16px; line-height: 24px; }

.share { position: absolute; left: 0; bottom: 0; width: 47px; height: 24px; line-height: 24px; overflow: hidden; border-radius: 0 4px 0 0; background: #111; color: #fff; font-size: 12px; text-indent: -10px; white-space: nowrap; }
.ime { position: absolute; right: 189px; bottom: 3px; height: 25px; display: flex; align-items: center; background: #fff; border-radius: 2px; padding-left: 5px; }
.ime button { width: 24px; }
.ime-logo { position: relative; margin: -4px 0 0 -34px; }
.handle { position: absolute; right: -4px; top: 498px; width: 4px; height: 24px; border: 1px solid #999; border-width: 0 1px; z-index: 2; }

/* Chat */
.chat { width: 279px; display: flex; flex-direction: column; background: #f4f8fb; font-size: 12px; }
.tabs { height: 31px; display: flex; border-top: 1px solid #e2e5e8; }
.tab { flex: 1; display: flex; align-items: center; padding: 0 9px 2px; gap: 8px; background: #f4f6fa; border-bottom: 1px solid #dde2e8; color: #222; }
.tab.active { flex: none; width: 150px; padding-right: 5px; background: #fff; border-bottom-color: #fff; border-right: 1px solid #dde2e8; }
.pop { margin-left: auto; }
.messages { flex: 1; }
.compose { height: 246px; display: flex; flex-direction: column; border-top: 1px solid #e2e6ea; padding: 9px 12px; position: relative; }
.to { display: flex; gap: 6px; height: 18px; align-items: center; color: #444; }
.to button { color: #2468b8; }
.compose textarea { flex: 1; margin: 14px 0 0; padding: 0; border: 0; background: none; resize: none; line-height: 18px; }
.compose textarea::placeholder { color: #a9b2be; }
.ibeam { position: absolute; left: 64px; top: 91px; }
.ball { position: absolute; right: 9px; bottom: 32px; width: 50px; height: 50px; padding: 2px; border-radius: 50%; background: #e6f7ff; box-shadow: 0 1px 3px rgba(0, 0, 0, .2); }
.ball span { position: absolute; left: 0; right: 0; top: 0; line-height: 50px; text-align: center; color: #fff; font-size: 14px; }

/* Taskbar */
.taskbar { height: 30px; position: relative; display: flex; justify-content: space-between; border-top: 1px solid #7fb3d8; background: linear-gradient(90deg, #2f93cb, #44a6d8 15%, #3d9dd4 30%, #2f8ccc 50%, #2379c0 66%, #1c62ae 85%, #1d5ea6 87%, #143f73 89%, #123a69); }
.swoosh { position: absolute; left: 71%; top: 0; filter: blur(1px); }
.apps { display: flex; margin-left: -22px; }
.apps button { width: 46px; }
.apps .running { width: 38px; margin-left: 2px; border: 1px solid #1c4d70; border-radius: 2px; background: linear-gradient(135deg, #a9d6ec, #4fa3d1); box-shadow: inset 0 0 0 1px #b9e0f2, 4px 0 0 -1px #7fc0e0, 5px 0 0 0 #2a6d96; }
.iq span { padding: 0 1px; background: #0dbb4b; border-radius: 2px; color: #fff; font-size: 7px; font-weight: 700; line-height: 14px; }
.tray { display: flex; align-items: center; gap: 9px; padding-right: 19px; color: #fff; }
.dots { width: 8px; height: 20px; background: radial-gradient(circle, #5a85b8 1px, transparent 1px) 0 0 / 3px 3px; }
.ch { font-family: "Liberation Mono", monospace; font-size: 11px; }
```
